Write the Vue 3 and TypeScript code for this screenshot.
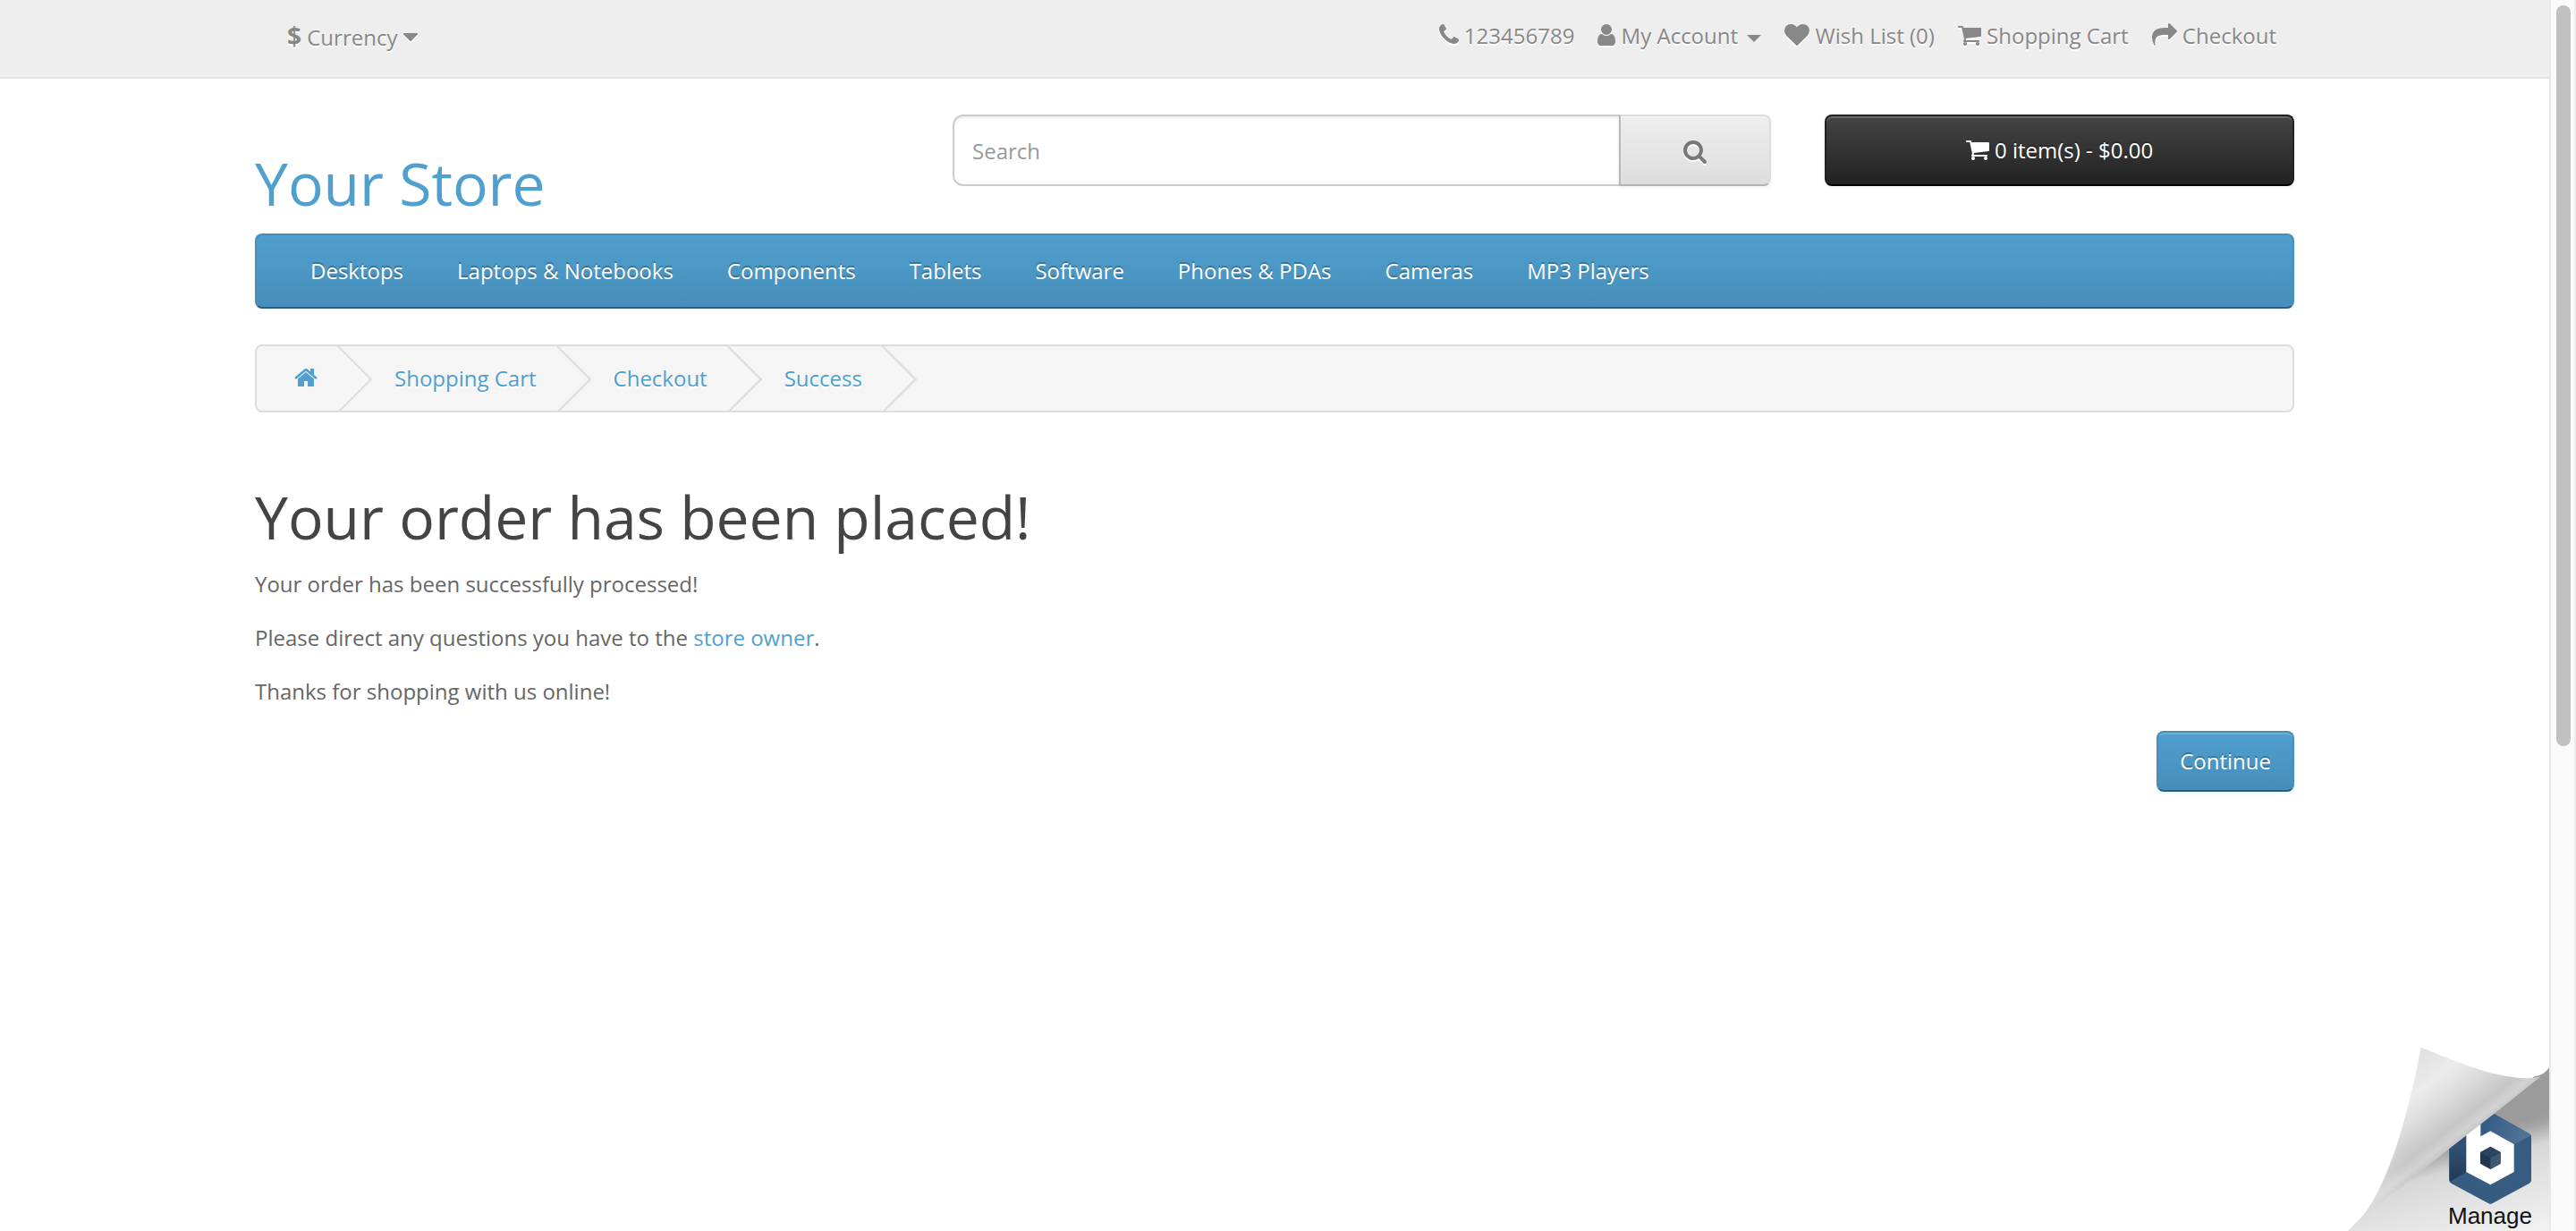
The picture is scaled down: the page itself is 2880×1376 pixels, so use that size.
<script setup lang="ts">
import { ref } from 'vue'

interface Icon {
  box: string
  width: number
  path: string
}

const icons: Record<string, Icon> = {
  phone: {
    box: '192 0 1408 1792',
    width: 22,
    path: 'M1600 1240q0 27-10 70.5t-21 68.5q-21 50-122 106-94 51-186 51-27 0-53-3.5t-57.5-12.5-47-14.5-55.5-20.5-49-18q-98-35-175-83-127-79-264-216t-216-264q-48-77-83-175-3-9-18-49t-20.5-55.5-14.5-47-12.5-57.5-3.5-53q0-92 51-186 56-101 106-122 25-11 68.5-21t70.5-10q14 0 21 3 18 6 53 76 11 19 30 54t35 63.5 31 53.5q3 4 17.5 25t21.5 35.5 7 28.5q0 20-28.5 50t-62 55-62 53-28.5 46q0 9 5 22.5t8.5 20.5 14 24 11.5 19q76 137 174 235t235 174q2 1 19 11.5t24 14 20.5 8.5 22.5 5q18 0 46-28.5t53-62 55-62 50-28.5q14 0 28.5 7t35.5 21.5 25 17.5q25 15 53.5 31t63.5 35 54 30q70 35 76 53 3 7 3 21z',
  },
  user: {
    box: '256 0 1280 1792',
    width: 20,
    path: 'M1536 1399q0 109-62.5 187t-150.5 78h-854q-88 0-150.5-78t-62.5-187q0-85 8.5-160.5t31.5-152 58.5-131 94-89 134.5-34.5q131 128 313 128t313-128q76 0 134.5 34.5t94 89 58.5 131 31.5 152 8.5 160.5zm-256-887q0 159-112.5 271.5t-271.5 112.5-271.5-112.5-112.5-271.5 112.5-271.5 271.5-112.5 271.5 112.5 112.5 271.5z',
  },
  heart: {
    box: '0 0 1792 1792',
    width: 28,
    path: 'M896 1664q-26 0-44-18l-624-602q-10-8-27.5-26t-55.5-65.5-68-97.5-53.5-121-23.5-138q0-220 127-344t351-124q62 0 126.5 21.5t120 58 95.5 68.5 76 68q36-36 76-68t95.5-68.5 120-58 126.5-21.5q224 0 351 124t127 344q0 221-229 450l-623 600q-18 18-44 18z',
  },
  cart: {
    box: '64 0 1664 1792',
    width: 26,
    path: 'M704 1536q0 52-38 90t-90 38-90-38-38-90 38-90 90-38 90 38 38 90zm896 0q0 52-38 90t-90 38-90-38-38-90 38-90 90-38 90 38 38 90zm128-1088v512q0 24-16.5 42.5t-40.5 21.5l-1044 122q13 60 13 70 0 16-24 64h920q26 0 45 19t19 45-19 45-45 19h-1024q-26 0-45-19t-19-45q0-11 8-31.5t16-36 21.5-40 15.5-29.5l-177-823h-204q-26 0-45-19t-19-45 19-45 45-19h256q16 0 28.5 6.5t19.5 15.5 13 24.5 8 26 5.5 29.5 4.5 26h1201q26 0 45 19t19 45z',
  },
  share: {
    box: '0 0 1792 1792',
    width: 28,
    path: 'M1792 640q0 26-19 45l-512 512q-19 19-45 19t-45-19-19-45v-256h-224q-98 0-175.5 6t-154 21.5-133 42.5-105.5 69.5-80 101-48.5 138.5-17.5 181q0 55 5 123 0 6 2.5 23.5t2.5 26.5q0 15-8.5 25t-23.5 10q-16 0-28-17-7-9-13-22t-13.5-30-10.5-24q-127-285-127-451 0-199 53-333 162-403 875-403h224v-256q0-26 19-45t45-19 45 19l512 512q19 19 19 45z',
  },
  search: {
    box: '64 0 1664 1792',
    width: 26,
    path: 'M1216 832q0-185-131.5-316.5t-316.5-131.5-316.5 131.5-131.5 316.5 131.5 316.5 316.5 131.5 316.5-131.5 131.5-316.5zm512 832q0 52-38 90t-90 38q-54 0-90-38l-343-342q-179 124-399 124-143 0-273.5-55.5t-225-150-150-225-55.5-273.5 55.5-273.5 150-225 225-150 273.5-55.5 273.5 55.5 225 150 150 225 55.5 273.5q0 220-124 399l343 343q37 37 37 90z',
  },
  home: {
    box: '64 0 1664 1792',
    width: 26,
    path: 'M1472 992v480q0 26-19 45t-45 19h-384v-384h-256v384h-384q-26 0-45-19t-19-45v-480q0-1 .5-3t.5-3l575-474 575 474q1 2 1 6zm223-69l-62 74q-8 9-21 11h-3q-13 0-21-7l-692-577-692 577q-12 8-24 7-13-2-21-11l-62-74q-8-10-7-23.5t11-21.5l719-599q32-26 76-26t76 26l244 204v-195q0-14 9-23t23-9h192q14 0 23 9t9 23v408l219 182q10 8 11 21.5t-7 23.5z',
  },
  caret: {
    box: '384 0 1024 1792',
    width: 16,
    path: 'M1408 704q0 26-19 45l-448 448q-19 19-45 19t-45-19l-448-448q-19-19-19-45t19-45 45-19h896q26 0 45 19t19 45z',
  },
}

const topLinks = [
  { icon: 'phone', label: '123456789', menu: false },
  { icon: 'user', label: 'My Account', menu: true },
  { icon: 'heart', label: 'Wish List (0)', menu: false },
  { icon: 'cart', label: 'Shopping Cart', menu: false },
  { icon: 'share', label: 'Checkout', menu: false },
]

const categories = [
  'Desktops',
  'Laptops & Notebooks',
  'Components',
  'Tablets',
  'Software',
  'Phones & PDAs',
  'Cameras',
  'MP3 Players',
]

const crumbs = ['Shopping Cart', 'Checkout', 'Success']

const query = ref('')
</script>

<template>
  <div class="window">
    <div class="page">
      <nav class="top" aria-label="Account">
        <div class="container top-row">
          <button type="button" class="currency">
            <strong>$</strong> Currency
            <svg class="icon" :viewBox="icons.caret.box" :width="icons.caret.width" height="28" aria-hidden="true"><path :d="icons.caret.path" /></svg>
          </button>
          <ul class="top-links">
            <li v-for="link in topLinks" :key="link.label">
              <a href="#"><svg class="icon" :viewBox="icons[link.icon].box" :width="icons[link.icon].width" height="28" aria-hidden="true"><path :d="icons[link.icon].path" /></svg> {{ link.label }} <span v-if="link.menu" class="caret"></span></a>
            </li>
          </ul>
        </div>
      </nav>

      <header class="container header">
        <h1 class="logo"><a href="#">Your Store</a></h1>
        <form class="search" role="search" @submit.prevent>
          <input v-model="query" type="text" placeholder="Search" aria-label="Search" />
          <button type="submit" aria-label="Search">
            <svg class="icon" :viewBox="icons.search.box" :width="icons.search.width" height="28" aria-hidden="true"><path :d="icons.search.path" /></svg>
          </button>
        </form>
        <button type="button" class="cart">
          <svg class="icon" :viewBox="icons.cart.box" :width="icons.cart.width" height="28" aria-hidden="true"><path :d="icons.cart.path" /></svg> 0 item(s) - $0.00
        </button>
      </header>

      <div class="container">
        <nav class="menu" aria-label="Categories">
          <a v-for="name in categories" :key="name" href="#">{{ name }}</a>
        </nav>

        <ol class="breadcrumb">
          <li>
            <a href="#" aria-label="Home"><svg class="icon" :viewBox="icons.home.box" :width="icons.home.width" height="28" aria-hidden="true"><path :d="icons.home.path" /></svg></a>
          </li>
          <li v-for="name in crumbs" :key="name"><a href="#">{{ name }}</a></li>
        </ol>

        <main class="content">
          <h1>Your order has been placed!</h1>
          <p>Your order has been successfully processed!</p>
          <p>Please direct any questions you have to the <a href="#">store owner</a>.</p>
          <p>Thanks for shopping with us online!</p>
          <div class="buttons">
            <a href="#" class="continue">Continue</a>
          </div>
        </main>
      </div>

      <a href="#" class="manage" aria-label="Manage">
        <svg viewBox="75 60 675 618" width="225" height="206">
          <defs>
            <linearGradient id="under" gradientUnits="userSpaceOnUse" x1="690" y1="300" x2="790" y2="640">
              <stop offset="0" stop-color="#9b9b9b" />
              <stop offset="0.08" stop-color="#a6a6a6" />
              <stop offset="0.26" stop-color="#d6d6d6" />
              <stop offset="0.5" stop-color="#e0e0e0" />
              <stop offset="1" stop-color="#f0f0f0" />
            </linearGradient>
            <linearGradient id="flap" gradientUnits="userSpaceOnUse" x1="320" y1="62" x2="519" y2="322">
              <stop offset="0" stop-color="#e0e0e0" />
              <stop offset="0.35" stop-color="#ebebeb" />
              <stop offset="0.55" stop-color="#dedede" />
              <stop offset="0.84" stop-color="#c6c6c6" />
              <stop offset="0.94" stop-color="#d2d2d2" />
              <stop offset="1" stop-color="#c6c6c6" />
            </linearGradient>
            <linearGradient id="flapEnd" gradientUnits="userSpaceOnUse" x1="280" y1="440" x2="90" y2="670">
              <stop offset="0" stop-color="#e4e4e4" stop-opacity="0" />
              <stop offset="1" stop-color="#e4e4e4" />
            </linearGradient>
            <linearGradient id="leftFace" x1="0" y1="0" x2="0" y2="1">
              <stop offset="0.3" stop-color="#305073" />
              <stop offset="1" stop-color="#223a55" />
            </linearGradient>
            <linearGradient id="topFace" gradientUnits="userSpaceOnUse" x1="540" y1="320" x2="680" y2="370">
              <stop offset="0" stop-color="#365d86" />
              <stop offset="1" stop-color="#547597" />
            </linearGradient>
          </defs>
          <path fill="url(#under)" d="M75 678C110 650 130 615 160 590L700 160Q732 158 750 130V678Z" />
          <path fill="#365c82" stroke="#365c82" stroke-width="24" stroke-linejoin="round" d="M553 292L678 362V508L553 575L427 508V362Z" />
          <path fill="url(#leftFace)" d="M415 350H472V480L418 513Q415 508 415 500Z" />
          <path fill="url(#topFace)" d="M520 276L560 283L678 348Q686 352 688 358L632 388L553 343L520 361Z" />
          <path fill="#fff" d="M472 290H520V361L553 343L632 387V480L553 523L472 480Z" />
          <path fill="#20374f" d="M553 395L587 414V452L553 471L519 452V414Z" />
          <path fill="#3e5873" d="M553 433L587 414V452L553 471Z" />
          <path fill="#2c445d" d="M553 395L587 414L553 433L519 414Z" />
          <path fill="url(#flap)" d="M320 62C440 112 560 158 650 165Q692 168 722 160L565 285L415 402L255 530Q150 600 75 678C185 600 265 350 320 62Z" />
          <path fill="url(#flapEnd)" d="M237 375L415 402L255 530Q150 600 75 678C150 620 205 500 237 375Z" />
          <text x="411" y="655" font-size="78">Manage</text>
        </svg>
      </a>
    </div>
    <div class="scrollbar" aria-hidden="true"><div class="thumb"></div></div>
  </div>
</template>

<style>
body {
  margin: 0;
}
</style>

<style scoped>
.window,
.window * {
  box-sizing: border-box;
}

.window {
  display: flex;
  min-height: 100vh;
  background: #fff;
  color: #666;
  font-family: 'Open Sans', sans-serif;
  font-size: 24px;
  line-height: 40px;
}

.page {
  position: relative;
  flex: 1;
  min-width: 0;
}

.container {
  width: 100%;
  max-width: 2340px;
  margin: 0 auto;
  padding: 0 30px;
}

a {
  color: #4f9fcf;
  text-decoration: none;
}

button,
input {
  font: inherit;
}

.icon {
  fill: currentColor;
  vertical-align: -4px;
  overflow: visible;
}

.top {
  margin-bottom: 40px;
  padding: 20px 0 24px;
  border-bottom: 2px solid #e2e2e2;
  background: #eee;
}

.top-row {
  display: flex;
  justify-content: space-between;
  align-items: flex-start;
}

.currency {
  height: 40px;
  margin: 2px 0 0;
  padding: 0 36px;
  border: 0;
  background: none;
  color: #888;
  text-shadow: 0 2px 0 #fff;
}

.currency strong {
  font-size: 28px;
  line-height: 32px;
}

.top-links {
  display: flex;
  gap: 26px;
  margin: 0;
  padding: 0 20px 0 0;
  list-style: none;
}

.top-links a {
  color: #888;
  text-shadow: 0 2px 0 #fff;
}

.top .icon {
  filter: drop-shadow(0 2px 0 #fff);
}

.caret {
  display: inline-block;
  margin-left: 4px;
  border-top: 8px solid #888;
  border-right: 8px solid transparent;
  border-left: 8px solid transparent;
  vertical-align: middle;
}

.header {
  display: grid;
  grid-template-columns: repeat(12, 1fr);
  column-gap: 60px;
  align-items: start;
  padding-bottom: 20px;
}

.logo {
  grid-column: span 4;
  margin: 40px 0 0;
  font-size: 66px;
  font-weight: 400;
  line-height: 73px;
}

.search {
  grid-column: span 5;
  display: flex;
}

.search input {
  flex: 1;
  min-width: 0;
  height: 80px;
  padding: 0 20px;
  border: 2px solid #ccc;
  border-radius: 12px 0 0 12px;
  background: #fff;
  box-shadow: inset 0 2px 2px rgba(0, 0, 0, 0.075);
  color: #555;
}

.search input::placeholder {
  color: #999;
  opacity: 1;
}

.search button {
  margin-left: -2px;
  padding: 0 70px;
  border: 2px solid;
  border-color: #ddd #ddd #b3b3b3 #b7b7b7;
  border-radius: 0 8px 8px 0;
  background: linear-gradient(#eee, #ddd);
  box-shadow: inset 0 2px 0 rgba(255, 255, 255, 0.2), 0 2px 4px rgba(0, 0, 0, 0.05);
  color: #777;
}

.search .icon {
  vertical-align: -6px;
  filter: drop-shadow(0 2px 0 #fff);
}

.cart {
  grid-column: span 3;
  height: 80px;
  padding: 0 20px;
  border: 2px solid;
  border-color: #222 #222 #000;
  border-radius: 8px;
  background: linear-gradient(#444, #222);
  box-shadow: inset 0 2px 0 rgba(255, 255, 255, 0.2), 0 2px 4px rgba(0, 0, 0, 0.05);
  color: #fff;
  text-shadow: 0 -2px 0 rgba(0, 0, 0, 0.25);
}

.menu {
  display: flex;
  margin-bottom: 40px;
  padding: 20px 30px;
  border: 2px solid;
  border-color: #478eb9 #478eb9 #2b5d7b;
  border-radius: 8px;
  background: linear-gradient(#4f9fcf, #478eb9);
}

.menu a {
  padding: 0 30px;
  color: #fff;
  text-shadow: 0 -2px 0 rgba(0, 0, 0, 0.25);
}

.breadcrumb {
  display: flex;
  margin: 0 0 40px;
  padding: 0 0 0 2px;
  overflow: hidden;
  border: 2px solid #ddd;
  border-radius: 8px;
  background: #f5f5f5;
}

.breadcrumb li {
  position: relative;
  padding: 16px 46px 16px 40px;
  text-shadow: 0 2px 0 #fff;
  list-style: none;
}

.breadcrumb li::after {
  content: '';
  position: absolute;
  top: 10px;
  right: -4px;
  width: 52px;
  height: 52px;
  border-right: 2px solid #ddd;
  border-bottom: 2px solid #ddd;
  transform: rotate(-45deg);
}

.breadcrumb a {
  position: relative;
  z-index: 1;
}

.content h1 {
  margin: 80px 0 19px;
  color: #444;
  font-size: 66px;
  font-weight: 400;
  line-height: 73px;
}

.content p {
  margin: 0 0 20px;
}

.buttons {
  display: flex;
  justify-content: flex-end;
  margin-top: 24px;
}

.continue {
  padding: 12px 24px;
  border: 2px solid;
  border-color: #478eb9 #478eb9 #2b5d7b;
  border-radius: 8px;
  background: linear-gradient(#4f9fcf, #478eb9);
  box-shadow: inset 0 2px 0 rgba(255, 255, 255, 0.2), 0 2px 4px rgba(0, 0, 0, 0.05);
  color: #fff;
  text-shadow: 0 -2px 0 rgba(0, 0, 0, 0.25);
}

.manage {
  position: absolute;
  right: 0;
  bottom: 0;
  line-height: 0;
}

.manage text {
  fill: #111;
  font-family: 'Liberation Sans', Arial, sans-serif;
}

.scrollbar {
  flex: 0 0 30px;
  padding: 6px 4px 6px 6px;
  border-right: 2px solid #ededed;
  border-left: 2px solid #e8e8e8;
  background: #fafafa;
}

.thumb {
  width: 16px;
  height: 828px;
  border-radius: 8px;
  background: #c1c1c1;
}
</style>
